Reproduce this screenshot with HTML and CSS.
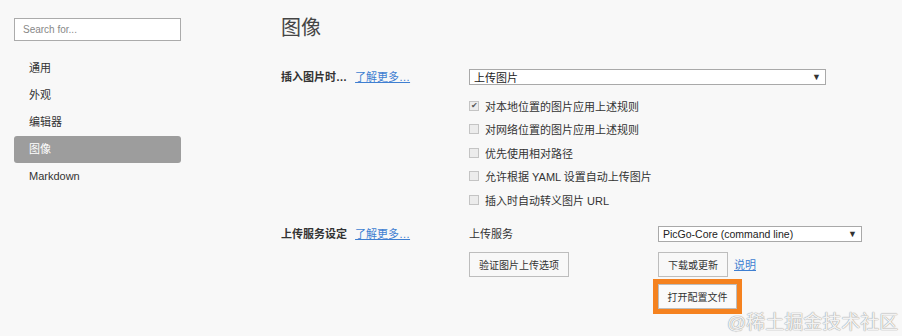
FILE: index.html
```html
<!DOCTYPE html>
<html>
<head>
    <link rel="stylesheet" href="styles.css">
</head>
<body>
    <div class="page">
        <div class="sidebar">
            <input type="text" class="search" placeholder="Search for...">
            <div class="nav">
                <div class="nav-item">通用</div>
                <div class="nav-item">外观</div>
                <div class="nav-item">编辑器</div>
                <div class="nav-item active">图像</div>
                <div class="nav-item">Markdown</div>
            </div>
        </div>
        <div class="main">
            <div class="title">图像</div>

            <div class="section">
                <div class="label">插入图片时… <a href="#" class="more">了解更多…</a></div>
                <div class="content">
                    <div class="select wide"><span>上传图片</span><span class="arrow">▼</span></div>
                    <div class="checks">
                        <div class="check"><span class="box checked">✔</span>对本地位置的图片应用上述规则</div>
                        <div class="check"><span class="box"></span>对网络位置的图片应用上述规则</div>
                        <div class="check"><span class="box"></span>优先使用相对路径</div>
                        <div class="check"><span class="box"></span>允许根据 YAML 设置自动上传图片</div>
                        <div class="check"><span class="box"></span>插入时自动转义图片 URL</div>
                    </div>
                </div>
            </div>

            <div class="section upload">
                <div class="label">上传服务设定 <a href="#" class="more">了解更多…</a></div>
                <div class="content">
                    <div class="upload-grid">
                        <div class="sub-label">上传服务</div>
                        <div class="select narrow"><span>PicGo-Core (command line)</span><span class="arrow">▼</span></div>
                        <div><button class="btn">验证图片上传选项</button></div>
                        <div class="btn-col">
                            <div class="btn-row">
                                <button class="btn">下载或更新</button>
                                <a href="#" class="more">说明</a>
                            </div>
                            <div class="highlight"><button class="btn">打开配置文件</button></div>
                        </div>
                    </div>
                </div>
            </div>
        </div>
    </div>
    <div class="watermark">@稀土掘金技术社区</div>
</body>
</html>
```

FILE: styles.css
```css
body {
    margin: 0;
    background-color: #f8f8f8;
    font-family: "Liberation Sans", "Noto Sans CJK SC", sans-serif;
    font-size: 11px;
    color: #333;
    width: 902px;
    height: 336px;
    overflow: hidden;
    position: relative;
}
.page {
    display: flex;
}
.sidebar {
    width: 167px;
    padding: 18px 0 0 14px;
}
.search {
    box-sizing: border-box;
    width: 167px;
    height: 23px;
    border: 1px solid #ababab;
    background: #fff;
    font-family: "Liberation Sans", sans-serif;
    font-size: 10px;
    padding: 0 8px;
    margin: 0;
    outline: none;
}
.search::placeholder {
    color: #888;
}
.nav {
    margin-top: 14px;
}
.nav-item {
    height: 27px;
    line-height: 27px;
    padding-left: 15px;
    color: #333;
    border-radius: 3px;
}
.nav-item.active {
    background-color: #9d9d9d;
    color: #fff;
}
.main {
    padding-left: 100px;
    padding-top: 15px;
    flex: 1;
}
.title {
    font-size: 20px;
    color: #444;
    line-height: 26px;
    margin-bottom: 28px;
}
.section {
    display: flex;
}
.label {
    width: 188px;
    font-weight: bold;
    color: #333;
    line-height: 17px;
}
.more {
    color: #3f7fd1;
    font-weight: normal;
    margin-left: 5px;
    text-decoration: underline;
}
.content {
    flex: 1;
}
.select {
    box-sizing: border-box;
    display: flex;
    justify-content: space-between;
    align-items: center;
    height: 16px;
    border: 1px solid #a9a9a9;
    background: #fff;
    padding: 0 4px;
    color: #222;
}
.select.wide {
    width: 357px;
}
.select.narrow {
    width: 204px;
    font-size: 10.5px;
}
.arrow {
    font-size: 9px;
    color: #333;
}
.checks {
    margin-top: 9px;
}
.check {
    display: flex;
    align-items: center;
    height: 23.5px;
    color: #333;
}
.box {
    box-sizing: border-box;
    width: 10px;
    height: 10px;
    border: 1px solid #c4c4c4;
    background: #ececec;
    margin-right: 6px;
    font-size: 8px;
    line-height: 8px;
    text-align: center;
    color: #555;
}
.upload {
    margin-top: 14px;
}
.upload-grid {
    display: grid;
    grid-template-columns: 189px 204px;
    row-gap: 10px;
}
.sub-label {
    line-height: 16px;
}
.btn {
    box-sizing: border-box;
    height: 25px;
    border: 1px solid #bdbdbd;
    background: #f8f8f8;
    font-family: "Liberation Sans", "Noto Sans CJK SC", sans-serif;
    font-size: 10px;
    color: #333;
    padding: 0 9px;
    margin: 0;
}
.btn-row {
    display: flex;
    align-items: center;
}
.btn-row .more {
    margin-left: 6px;
}
.highlight {
    display: inline-block;
    margin: 2px 0 0 -5px;
    border: 5px solid #f5821f;
}
.highlight .btn {
    width: 79px;
    padding: 0;
    background: #fafafa;
}
.watermark {
    position: absolute;
    left: 727px;
    top: 307px;
    font-size: 19px;
    color: rgba(255, 255, 255, 0.9);
    text-shadow: 0 0 1px #999, 0 0 1px #999;
}
```
